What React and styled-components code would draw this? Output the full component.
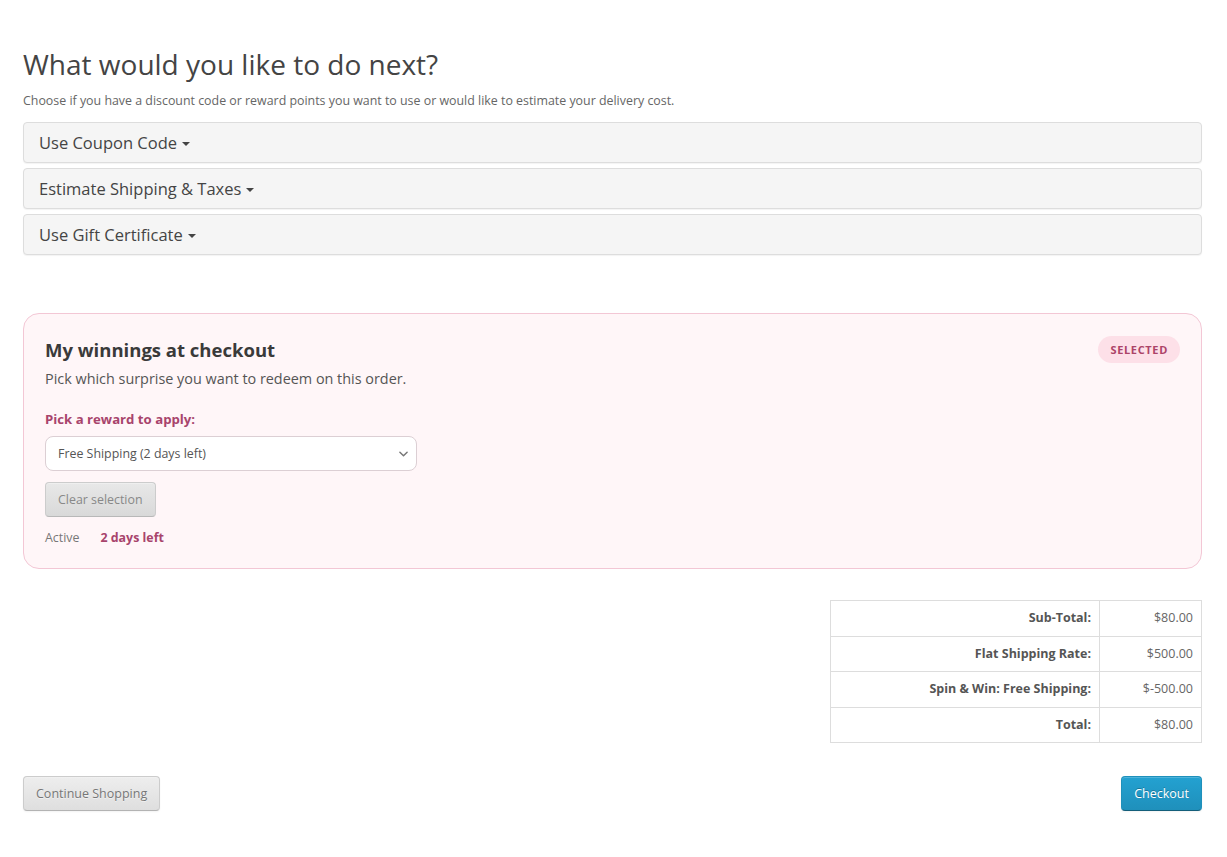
import React, { useState } from 'react';
import styled, { createGlobalStyle } from 'styled-components';

const GlobalStyle = createGlobalStyle`
  body {
    margin: 0;
    background: #fff;
    font-family: 'Open Sans', 'Liberation Sans', sans-serif;
    font-size: 12px;
    color: #666;
  }
`;

const sections = ['Use Coupon Code', 'Estimate Shipping & Taxes', 'Use Gift Certificate'];

const totals = [
  { label: 'Sub-Total:', value: '$80.00' },
  { label: 'Flat Shipping Rate:', value: '$500.00' },
  { label: 'Spin & Win: Free Shipping:', value: '$-500.00' },
  { label: 'Total:', value: '$80.00' },
];

function App() {
  const [reward, setReward] = useState('free-shipping');

  return (
    <>
      <GlobalStyle />
      <Page>
        <Heading>What would you like to do next?</Heading>
        <Intro>
          Choose if you have a discount code or reward points you want to use or would like to
          estimate your delivery cost.
        </Intro>
        <PanelGroup>
          {sections.map(title => (
            <Panel key={title}>
              <PanelTitle>
                {title}
                <Caret />
              </PanelTitle>
            </Panel>
          ))}
        </PanelGroup>

        <WinCard>
          <CardHeader>
            <CardTitle>My winnings at checkout</CardTitle>
            <Badge>SELECTED</Badge>
          </CardHeader>
          <CardText>Pick which surprise you want to redeem on this order.</CardText>
          <FieldLabel>Pick a reward to apply:</FieldLabel>
          <SelectWrap>
            <RewardSelect value={reward} onChange={e => setReward(e.target.value)}>
              <option value="free-shipping">Free Shipping (2 days left)</option>
              <option value="">-- None --</option>
            </RewardSelect>
            <Chevron viewBox="0 0 10 6" aria-hidden="true">
              <path d="M1 1l4 4 4-4" />
            </Chevron>
          </SelectWrap>
          <ClearButton type="button">Clear selection</ClearButton>
          <StatusRow>
            <span>Active</span>
            <Remaining>2 days left</Remaining>
          </StatusRow>
        </WinCard>

        <TotalsWrap>
          <TotalsTable>
            <tbody>
              {totals.map(row => (
                <tr key={row.label}>
                  <LabelCell>{row.label}</LabelCell>
                  <ValueCell>{row.value}</ValueCell>
                </tr>
              ))}
            </tbody>
          </TotalsTable>
        </TotalsWrap>

        <Actions>
          <DefaultButton type="button">Continue Shopping</DefaultButton>
          <PrimaryButton type="button">Checkout</PrimaryButton>
        </Actions>
      </Page>
    </>
  );
}

const Page = styled.div`
  width: 1179px;
  margin-left: 23px;
  padding: 47px 0 40px;
`;

const Heading = styled.h1`
  margin: 0;
  font-size: 28px;
  line-height: 34px;
  font-weight: 400;
  color: #444;
`;

const Intro = styled.p`
  margin: 11px 0 12px;
  line-height: 18px;
  font-size: 12.4px;
`;

const PanelGroup = styled.div`
  display: flex;
  flex-direction: column;
  gap: 5px;
`;

const Panel = styled.div`
  background: #f5f5f5;
  border: 1px solid #ddd;
  border-radius: 4px;
  box-shadow: 0 1px 1px rgba(0, 0, 0, 0.05);
  padding: 9px 15px;
`;

const PanelTitle = styled.div`
  display: flex;
  align-items: center;
  font-size: 16.5px;
  line-height: 21px;
  color: #444;
`;

const Caret = styled.span`
  display: inline-block;
  margin-left: 5px;
  margin-top: 2px;
  border-top: 4px solid #444;
  border-left: 4px solid transparent;
  border-right: 4px solid transparent;
`;

const WinCard = styled.div`
  margin-top: 58px;
  background: #fff6f8;
  border: 1px solid #f3c7d5;
  border-radius: 16px;
  padding: 22px 21px 21px;
`;

const CardHeader = styled.div`
  display: flex;
  align-items: center;
  justify-content: space-between;
  height: 26px;
`;

const CardTitle = styled.h3`
  margin: 0;
  font-size: 18.5px;
  font-weight: 700;
  color: #3a3a3a;
`;

const Badge = styled.span`
  background: #fde0e8;
  color: #ac4468;
  font-size: 11px;
  font-weight: 700;
  letter-spacing: 0.06em;
  padding: 5px 12px;
  border-radius: 14px;
  line-height: 17px;
`;

const CardText = styled.p`
  margin: 6px 0 0;
  font-size: 14.4px;
  line-height: 22px;
  color: #555;
`;

const FieldLabel = styled.div`
  margin-top: 20px;
  font-size: 13.2px;
  font-weight: 700;
  line-height: 18px;
  color: #a8446c;
`;

const SelectWrap = styled.div`
  position: relative;
  margin-top: 8px;
  width: 372px;
`;

const RewardSelect = styled.select`
  display: block;
  width: 100%;
  height: 35px;
  padding: 0 12px;
  appearance: none;
  background: #fff;
  border: 1px solid #dccfd4;
  border-radius: 8px;
  font-family: inherit;
  font-size: 12.4px;
  color: #555;
`;

const Chevron = styled.svg`
  position: absolute;
  right: 9px;
  top: 15px;
  width: 9px;
  height: 6px;
  fill: none;
  stroke: #777;
  stroke-width: 1.6;
  stroke-linecap: round;
  stroke-linejoin: round;
  pointer-events: none;
`;

const ClearButton = styled.button`
  display: block;
  margin-top: 11px;
  height: 35px;
  padding: 0 12px;
  font-family: inherit;
  font-size: 12.4px;
  color: #888;
  background: linear-gradient(#e8e8e8, #d9d9d9);
  border: 1px solid #ccc;
  border-bottom-color: #b8b8b8;
  border-radius: 4px;
  box-shadow: inset 0 1px 0 rgba(255, 255, 255, 0.3);
`;

const StatusRow = styled.div`
  display: flex;
  gap: 21px;
  margin-top: 12px;
  line-height: 18px;
  font-size: 12.4px;
  color: #777;
`;

const Remaining = styled.span`
  font-weight: 700;
  color: #a8446c;
`;

const TotalsWrap = styled.div`
  display: flex;
  justify-content: flex-end;
  margin-top: 31px;
`;

const TotalsTable = styled.table`
  border-collapse: collapse;
  width: 372px;
`;

const Cell = styled.td`
  border: 1px solid #ddd;
  padding: 8px;
  line-height: 18.5px;
  text-align: right;
  font-size: 12.5px;
`;

const LabelCell = styled(Cell)`
  font-weight: 700;
  color: #555;
`;

const ValueCell = styled(Cell)`
  width: 85px;
  color: #666;
`;

const Actions = styled.div`
  display: flex;
  justify-content: space-between;
  margin-top: 33px;
`;

const BaseButton = styled.button`
  height: 35px;
  padding: 0 12px;
  border-radius: 4px;
  font-family: inherit;
  font-size: 12.5px;
  box-shadow: inset 0 1px 0 rgba(255, 255, 255, 0.2), 0 1px 2px rgba(0, 0, 0, 0.05);
`;

const DefaultButton = styled(BaseButton)`
  color: #777;
  text-shadow: 0 1px 0 rgba(255, 255, 255, 0.5);
  background: linear-gradient(#eeeeee, #dedede);
  border: 1px solid #ccc;
  border-bottom-color: #b3b3b3;
`;

const PrimaryButton = styled(BaseButton)`
  color: #fff;
  text-shadow: 0 -1px 0 rgba(0, 0, 0, 0.25);
  background: linear-gradient(#23a1d1, #1f90bb);
  border: 1px solid #1f90bb;
  border-bottom-color: #145e7a;
`;

export default App;
